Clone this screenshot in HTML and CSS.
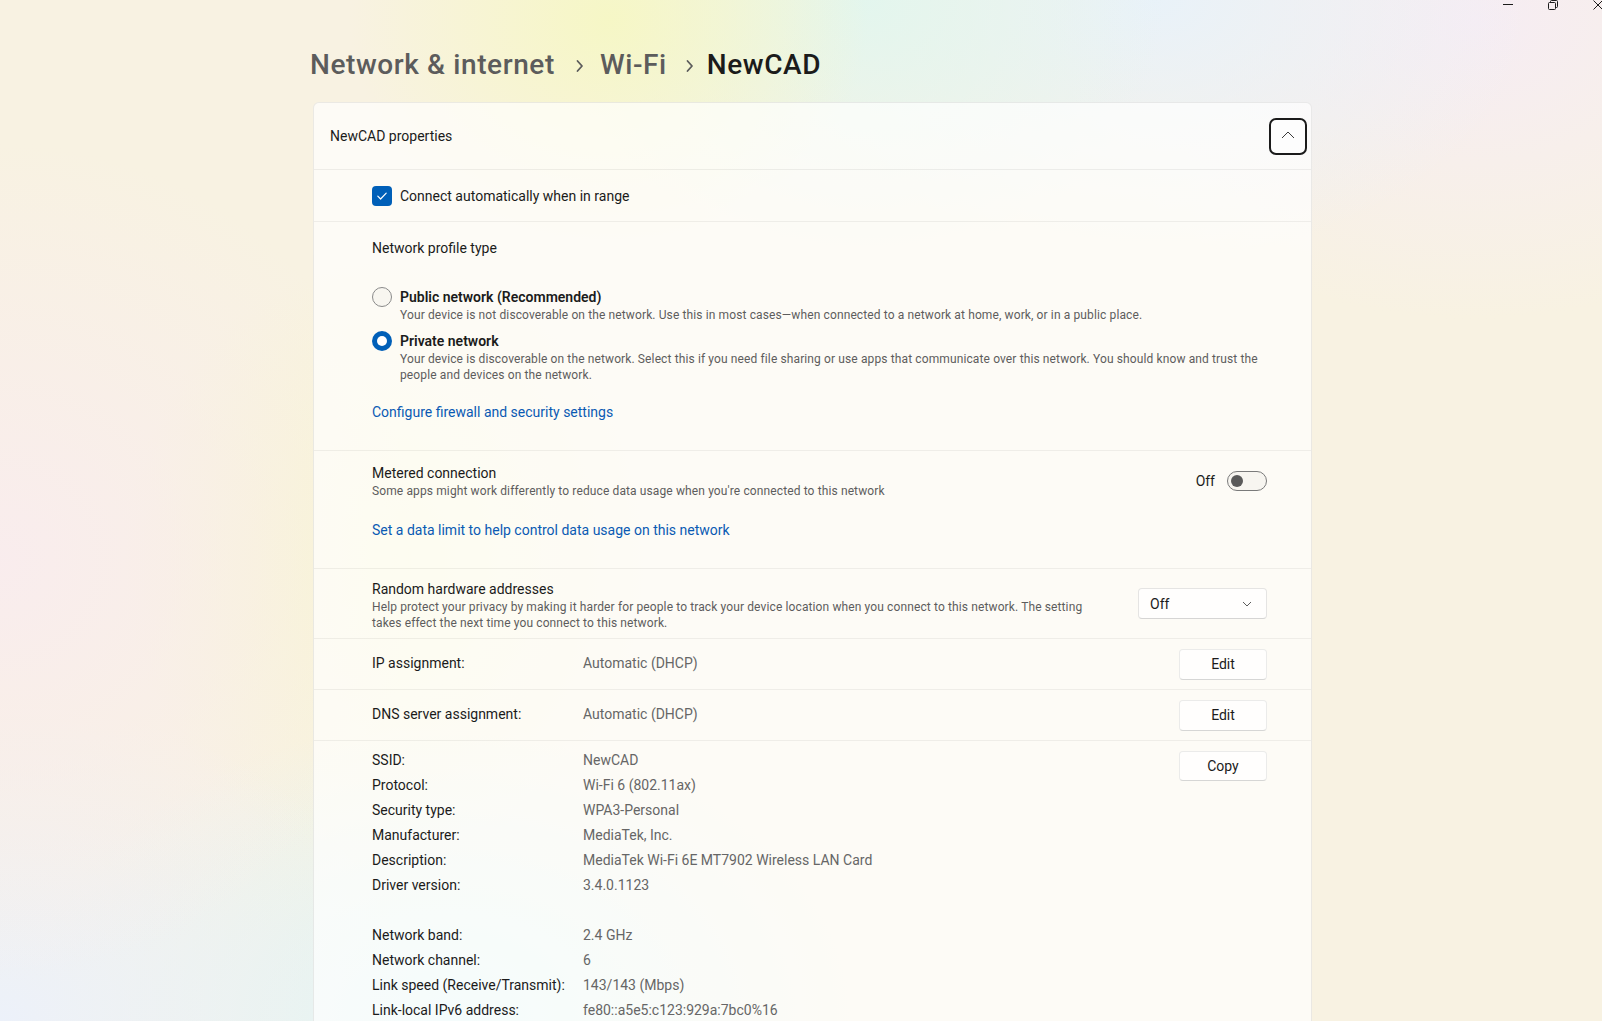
FILE: index.html
```html
<!DOCTYPE html>
<html lang="en">
<head>
<meta charset="utf-8">
<title>Settings - NewCAD</title>
<link rel="stylesheet" href="styles.css">
</head>
<body>
<div class="titlebar">
  <svg class="cap" width="10" height="10" viewBox="0 0 10 10"><path d="M0 4.5H10" stroke="#1b1b1b" stroke-width="1" fill="none"/></svg>
  <svg class="cap" width="10" height="10" viewBox="0 0 10 10"><rect x="0.5" y="2.5" width="7" height="7" rx="1" stroke="#1b1b1b" fill="none"/><path d="M2.5 2.5V1.5Q2.5 0.5 3.5 0.5H8.5Q9.5 0.5 9.5 1.5V6.5Q9.5 7.5 8.5 7.5H7.5" stroke="#1b1b1b" fill="none"/></svg>
  <svg class="cap" width="10" height="10" viewBox="0 0 10 10"><path d="M0.5 0.5L9.5 9.5M9.5 0.5L0.5 9.5" stroke="#1b1b1b" stroke-width="1" fill="none"/></svg>
</div>

<main class="page">
  <h1 class="crumbs">
    <span class="crumb">Network &amp; internet</span>
    <svg class="crumb-sep" width="16" height="16" viewBox="0 0 16 16"><path d="M5.5 3L10 8L5.5 13" stroke="#5c5c5c" stroke-width="1.8" fill="none" stroke-linecap="round" stroke-linejoin="round"/></svg>
    <span class="crumb">Wi-Fi</span>
    <svg class="crumb-sep sep2" width="16" height="16" viewBox="0 0 16 16"><path d="M5.5 3L10 8L5.5 13" stroke="#5c5c5c" stroke-width="1.8" fill="none" stroke-linecap="round" stroke-linejoin="round"/></svg>
    <span class="crumb current">NewCAD</span>
  </h1>

  <section class="card">
    <header class="card-head">
      <span class="card-title">NewCAD properties</span>
      <button class="collapse" type="button">
        <svg width="14" height="8" viewBox="0 0 14 8"><path d="M1 7L7 1L13 7" stroke="#3a3a3a" stroke-width="1" fill="none"/></svg>
      </button>
    </header>

    <div class="row check-row">
      <span class="checkbox"><svg width="20" height="20" viewBox="0 0 20 20"><path d="M5.8 10.2L8.6 13L14.2 7.2" stroke="#fff" stroke-width="1.2" fill="none" stroke-linecap="round" stroke-linejoin="round"/></svg></span>
      <span class="label">Connect automatically when in range</span>
    </div>

    <div class="row profile">
      <div class="label">Network profile type</div>
      <div class="radios">
        <div class="radio-opt">
          <span class="radio"></span>
          <div class="radio-text">
            <div class="radio-title">Public network (Recommended)</div>
            <div class="desc">Your device is not discoverable on the network. Use this in most cases—when connected to a network at home, work, or in a public place.</div>
          </div>
        </div>
        <div class="radio-opt second">
          <span class="radio on"></span>
          <div class="radio-text">
            <div class="radio-title">Private network</div>
            <div class="desc wrap-private">Your device is discoverable on the network. Select this if you need file sharing or use apps that communicate over this network. You should know and trust the people and devices on the network.</div>
          </div>
        </div>
      </div>
      <a class="link link-fw" href="#">Configure firewall and security settings</a>
    </div>

    <div class="row metered">
      <div class="split">
        <div>
          <div class="label">Metered connection</div>
          <div class="desc">Some apps might work differently to reduce data usage when you're connected to this network</div>
        </div>
        <div class="toggle-wrap">
          <span class="label">Off</span>
          <span class="toggle"><span class="knob"></span></span>
        </div>
      </div>
      <a class="link link-data" href="#">Set a data limit to help control data usage on this network</a>
    </div>

    <div class="row random">
      <div class="random-text">
        <div class="label">Random hardware addresses</div>
        <div class="desc">Help protect your privacy by making it harder for people to track your device location when you connect to this network. The setting takes effect the next time you connect to this network.</div>
      </div>
      <div class="dropdown">
        <span>Off</span>
        <svg width="10" height="6" viewBox="0 0 10 6"><path d="M1 1L5 5L9 1" stroke="#5c5c5c" stroke-width="1" fill="none"/></svg>
      </div>
    </div>

    <div class="row kv-row">
      <span class="key">IP assignment:</span>
      <span class="val">Automatic (DHCP)</span>
      <button class="btn" type="button">Edit</button>
    </div>

    <div class="row kv-row">
      <span class="key">DNS server assignment:</span>
      <span class="val">Automatic (DHCP)</span>
      <button class="btn" type="button">Edit</button>
    </div>

    <div class="row info">
      <dl class="props">
        <dt>SSID:</dt><dd>NewCAD</dd>
        <dt>Protocol:</dt><dd>Wi-Fi 6 (802.11ax)</dd>
        <dt>Security type:</dt><dd>WPA3-Personal</dd>
        <dt>Manufacturer:</dt><dd>MediaTek, Inc.</dd>
        <dt>Description:</dt><dd>MediaTek Wi-Fi 6E MT7902 Wireless LAN Card</dd>
        <dt>Driver version:</dt><dd>3.4.0.1123</dd>
        <dt class="gap">Network band:</dt><dd class="gap">2.4 GHz</dd>
        <dt>Network channel:</dt><dd>6</dd>
        <dt>Link speed (Receive/Transmit):</dt><dd>143/143 (Mbps)</dd>
        <dt>Link-local IPv6 address:</dt><dd>fe80::a5e5:c123:929a:7bc0%16</dd>
      </dl>
      <button class="btn copy" type="button">Copy</button>
    </div>
  </section>
</main>
</body>
</html>
```

FILE: styles.css
```css
* { box-sizing: border-box; }

html, body {
  margin: 0;
  padding: 0;
}

body {
  width: 1602px;
  height: 1021px;
  overflow: hidden;
  font-family: Roboto, "Noto Sans", "Liberation Sans", sans-serif;
  font-size: 14px;
  color: #1b1b1b;
  background-color: #f7f1e4;
  background-image:
    radial-gradient(ellipse 260px 220px at 38% 2%, rgba(246, 247, 196, 0.95), rgba(246, 247, 196, 0) 100%),
    radial-gradient(ellipse 300px 260px at 54% 0%, rgba(226, 246, 238, 0.95), rgba(226, 246, 238, 0) 100%),
    radial-gradient(ellipse 380px 260px at 72% 0%, rgba(232, 242, 250, 0.95), rgba(232, 242, 250, 0) 100%),
    radial-gradient(ellipse 420px 300px at 92% 2%, rgba(246, 236, 244, 0.95), rgba(246, 236, 244, 0) 100%),
    radial-gradient(ellipse 420px 420px at 0% 55%, rgba(249, 236, 238, 0.95), rgba(249, 236, 238, 0) 100%),
    radial-gradient(ellipse 420px 320px at 0% 100%, rgba(236, 241, 250, 1), rgba(236, 241, 250, 0) 100%),
    radial-gradient(ellipse 420px 300px at 28% 100%, rgba(224, 245, 245, 1), rgba(224, 245, 245, 0) 100%),
    radial-gradient(ellipse 260px 300px at 24% 55%, rgba(248, 246, 206, 0.9), rgba(248, 246, 206, 0) 100%),
    linear-gradient(180deg, #f8f2e2 0%, #f8f2e2 100%);
}

/* caption buttons */
.titlebar {
  height: 12px;
  display: flex;
  justify-content: flex-end;
  align-items: flex-start;
  gap: 35px;
  margin-right: -1px;
}
.cap { display: block; }

/* page column */
.page {
  margin-left: 313px;
  width: 999px;
}

.crumbs {
  margin: 35px 0 19px -3px;
  display: flex;
  align-items: center;
  height: 36px;
  font-size: 28px;
  line-height: 36px;
  font-weight: 500;
  color: #5c5c5c;
  letter-spacing: 0.6px;
}
.crumb.current { color: #1b1b1b; }
.crumb-sep { margin: 2px 12px 0 17px; }
.crumb-sep.sep2 { margin: 2px 9px 0 15px; }

/* card */
.card {
  background: rgba(255, 255, 255, 0.68);
  border: 1px solid rgba(0, 0, 0, 0.07);
  border-bottom: none;
  border-radius: 6px 6px 0 0;
  height: 940px;
}

.card-head {
  height: 67px;
  display: flex;
  align-items: center;
  justify-content: space-between;
  padding: 0 4px 0 16px;
  border-bottom: 1px solid rgba(0, 0, 0, 0.06);
}
.card-title { line-height: 20px; }

.collapse {
  width: 38px;
  height: 37px;
  border: 2px solid #1b1b1b;
  border-radius: 7px;
  background: rgba(255, 255, 255, 0.5);
  display: flex;
  align-items: center;
  justify-content: center;
  padding: 0 0 2px 0;
}
.collapse svg { display: block; }

.row {
  padding: 0 44px 0 58px;
  border-bottom: 1px solid rgba(0, 0, 0, 0.055);
}

.label { line-height: 20px; }

.desc {
  font-size: 12px;
  line-height: 16px;
  color: #5d5d5d;
  letter-spacing: 0.12px;
}

/* checkbox row */
.check-row {
  height: 52px;
  display: flex;
  align-items: center;
  gap: 8px;
}
.checkbox {
  width: 20px;
  height: 20px;
  border-radius: 4px;
  background: #005fb8;
  display: block;
}
.checkbox svg { display: block; }

/* profile */
.profile {
  padding-top: 16px;
  padding-bottom: 28px;
}
.radios { margin-top: 29px; }
.radio-opt {
  display: flex;
  align-items: flex-start;
  gap: 8px;
}
.radio-opt.second { margin-top: 8px; }
.radio {
  flex: none;
  width: 20px;
  height: 20px;
  border-radius: 50%;
  border: 1px solid #8a8a8a;
  background: rgba(0, 0, 0, 0.02);
  display: flex;
  align-items: center;
  justify-content: center;
}
.radio.on {
  border: none;
  background: #005fb8;
}
.radio.on::after {
  content: "";
  width: 10px;
  height: 10px;
  border-radius: 50%;
  background: #fff;
}
.radio-title {
  font-weight: 600;
  line-height: 20px;
}
.wrap-private { max-width: 868px; }

.link {
  display: block;
  width: max-content;
  color: #0a5ab3;
  text-decoration: none;
  line-height: 20px;
}
.link-fw { margin-top: 19px; }

/* metered */
.metered {
  padding-top: 12px;
  padding-bottom: 28px;
}
.split {
  display: flex;
  align-items: center;
  justify-content: space-between;
}
.toggle-wrap {
  display: flex;
  align-items: center;
  gap: 12px;
}
.toggle {
  width: 40px;
  height: 20px;
  border-radius: 10px;
  border: 1px solid #7a7a7a;
  background: rgba(0, 0, 0, 0.025);
  display: flex;
  align-items: center;
  padding-left: 3px;
}
.knob {
  width: 12px;
  height: 12px;
  border-radius: 50%;
  background: #5a5a5a;
}
.link-data { margin-top: 21px; }

/* random hw */
.random {
  padding-top: 10px;
  padding-bottom: 7px;
  display: flex;
  align-items: center;
  justify-content: space-between;
}
.random-text { max-width: 722px; }
.dropdown {
  width: 129px;
  height: 31px;
  border: 1px solid rgba(0, 0, 0, 0.1);
  border-bottom-color: rgba(0, 0, 0, 0.16);
  border-radius: 4px;
  background: rgba(255, 255, 255, 0.75);
  display: flex;
  align-items: center;
  justify-content: space-between;
  padding: 0 14px 0 11px;
  margin-top: -3px;
}
.dropdown svg { display: block; }

/* key-value rows */
.kv-row {
  height: 51px;
  display: flex;
  align-items: center;
}
.key {
  width: 211px;
  flex: none;
  margin-top: -2px;
}
.val { color: #666; margin-top: -2px; }

.btn {
  margin-left: auto;
  width: 88px;
  height: 31px;
  font: inherit;
  color: #1b1b1b;
  background: rgba(255, 255, 255, 0.8);
  border: 1px solid rgba(0, 0, 0, 0.08);
  border-bottom-color: rgba(0, 0, 0, 0.16);
  border-radius: 4px;
  padding: 0 0 1px 0;
}

/* info */
.info {
  display: flex;
  align-items: flex-start;
  padding-top: 7px;
  border-bottom: none;
}
.props {
  margin: 0;
  display: grid;
  grid-template-columns: 211px auto;
  line-height: 25px;
}
.props dt { margin: 0; }
.props dd { margin: 0; color: #666; }
.props .gap { margin-top: 25px; }
.copy { margin-top: 3px; height: 30px; }
```
